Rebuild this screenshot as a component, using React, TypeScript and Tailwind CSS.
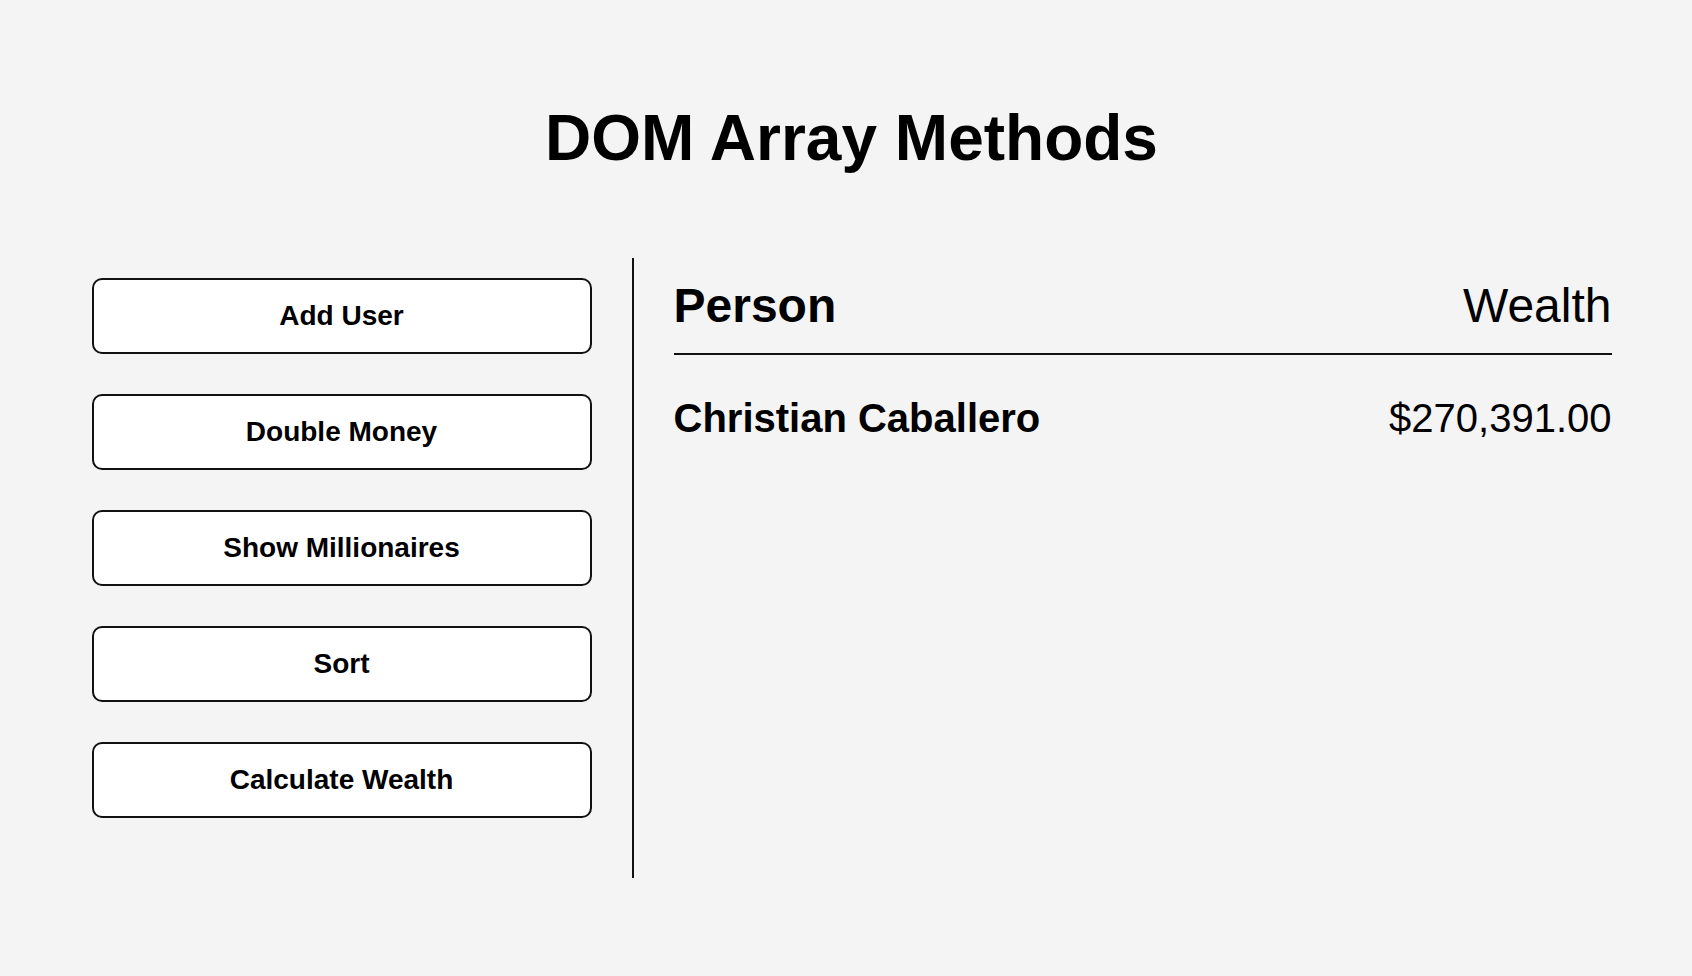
const buttons = ["Add User", "Double Money", "Show Millionaires", "Sort", "Calculate Wealth"]

const people = [{ name: "Christian Caballero", money: 270391 }]

const formatMoney = (n: number) =>
  "$" + n.toFixed(2).replace(/\d(?=(\d{3})+\.)/g, "$&,")

export default function App() {
  return (
    <div
      className="min-h-screen bg-[#f4f4f4] text-black flex flex-col items-center justify-center pl-[11px]"
      style={{ fontFamily: '"Liberation Sans", Arial, Helvetica, sans-serif' }}
    >
      <h1 className="text-[64px] leading-[74px] font-bold my-[43px]">DOM Array Methods</h1>

      <div className="flex w-[1600px] py-[40px] box-content">
        <aside className="w-[582px] shrink-0 px-[40px] py-[20px] border-r-2 border-[#111]">
          {buttons.map((b) => (
            <button
              key={b}
              className="block w-[500px] h-[76px] mb-[40px] bg-white border-2 border-[#111] rounded-[10px] text-[28px] leading-[32px] font-bold cursor-pointer"
            >
              {b}
            </button>
          ))}
        </aside>

        <main className="flex-1 px-[40px] py-[20px]">
          <h2 className="flex justify-between text-[48px] leading-[55px] font-normal pb-[20px] border-b-2 border-[#111] mb-[40px]">
            <strong>Person</strong> Wealth
          </h2>

          {people.map((p) => (
            <div key={p.name} className="flex justify-between text-[40px] leading-[46px] mb-[20px]">
              <strong>{p.name}</strong> {formatMoney(p.money)}
            </div>
          ))}
        </main>
      </div>
    </div>
  )
}
